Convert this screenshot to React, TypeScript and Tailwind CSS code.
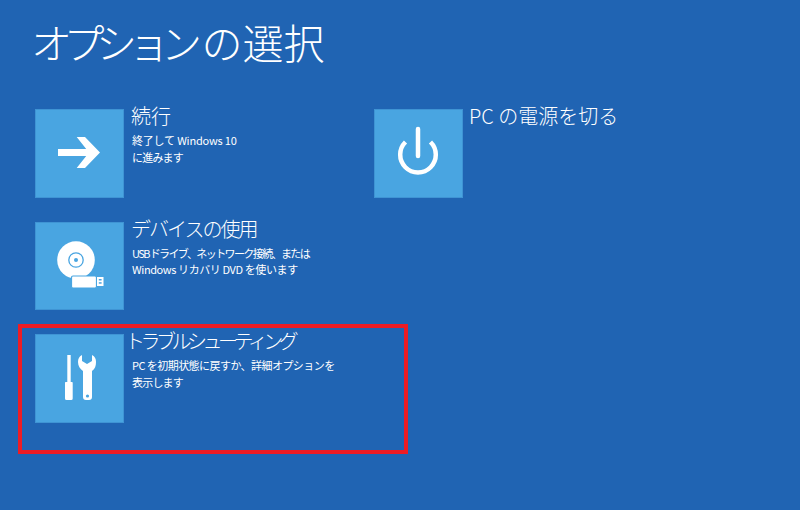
const font = "font-['Noto_Sans_CJK_JP','Noto_Sans',sans-serif]";

// icons are drawn in tile coordinates (89 x 89)
function TileIcon({ children }: { children: React.ReactNode }) {
  return (
    <svg width="89" height="89" viewBox="0 0 89 89" className="block">
      {children}
    </svg>
  );
}

function ArrowIcon() {
  return (
    <TileIcon>
      <path d="M23 40h33v7H23z" fill="#fff" />
      <path d="M41.700 28H50L65 43.500 50 59h-8.300L54 43.500z" fill="#fff" />
    </TileIcon>
  );
}

function DiscIcon() {
  return (
    <TileIcon>
      <circle cx="41" cy="38" r="18.800" fill="#fff" />
      <circle cx="41" cy="38" r="7.200" fill="none" stroke="#49a5e1" strokeWidth="1.300" />
      <circle cx="41" cy="38" r="2" fill="#49a5e1" />
      <rect x="36.500" y="54" width="25" height="12" rx="1.500" fill="#fff" stroke="#49a5e1" strokeWidth="1.200" />
      <rect x="62" y="55" width="6.500" height="9" fill="#fff" />
      <rect x="63.800" y="57" width="2.800" height="1.500" fill="#49a5e1" />
      <rect x="63.800" y="60.200" width="2.800" height="1.500" fill="#49a5e1" />
    </TileIcon>
  );
}

function ToolsIcon() {
  return (
    <TileIcon>
      <path d="M32.300 21h3.400v27H37a.7.7 0 0 1 .7.7V64.500a1.500 1.500 0 0 1-1.500 1.500h-4.700a1.500 1.500 0 0 1-1.500-1.500V48.700a.7.7 0 0 1 .7-.7h1.600z" fill="#fff" />
      <path
        d="M47 21C44 22.500 43 25 43 28c0 4 2 7 5 9v26a3 3 0 0 0 3 3h3a3 3 0 0 0 3-3V37c3-2 4-5 4-9 0-3-1-5.500-4-7v6l-5 3-5-3z"
        fill="#fff"
      />
      <circle cx="52.500" cy="62" r="1.600" fill="#49a5e1" />
    </TileIcon>
  );
}

function PowerIcon() {
  return (
    <TileIcon>
      <path d="M31.500 33A17.800 17.800 0 1 0 56.500 33" fill="none" stroke="#fff" strokeWidth="4.500" />
      <path d="M44 20v27" stroke="#fff" strokeWidth="4.500" strokeLinecap="round" />
    </TileIcon>
  );
}

type Line = { text: string; tracking: string };

function Option({
  icon,
  title,
  lines,
  titleClass = "ml-[7px]",
}: {
  icon: React.ReactNode;
  title: string;
  lines: Line[];
  titleClass?: string;
}) {
  return (
    <div className="flex items-start">
      <div className="h-[88.500px] w-[89px] shrink-0 bg-[#49a5e1] shadow-[inset_0_0_0_1px_#3f94d4]">{icon}</div>
      <div className="-mt-[7px] text-white">
        <h2 className={`whitespace-nowrap text-[20px] leading-[28px] font-light ${titleClass}`}>{title}</h2>
        {lines.length > 0 && (
          <div className="mt-[2px] ml-[8px] text-[11px] leading-[16.500px] whitespace-nowrap">
            {lines.map((l) => (
              <p key={l.text} className={l.tracking}>
                {l.text}
              </p>
            ))}
          </div>
        )}
      </div>
    </div>
  );
}

export default function App() {
  return (
    <div className={`relative h-[510px] w-[800px] overflow-hidden bg-[#2064b3] pt-[11px] pl-[35px] ${font}`}>
      <h1 className="-ml-[4px] text-[41px] leading-[60px] font-light whitespace-nowrap text-white">
        <span className="tracking-[-8.5px]">オプション</span>
        <span className="ml-[8px]">の選択</span>
      </h1>

      <div className="mt-[38px] grid w-[600px] grid-cols-[339px_1fr]">
        <div className="flex flex-col gap-[24px]">
          <Option
            icon={<ArrowIcon />}
            title="続行"
            lines={[
              { text: "終了して Windows 10", tracking: "tracking-[-0.2px]" },
              { text: "に進みます", tracking: "tracking-[-0.8px]" },
            ]}
          />
          <Option
            icon={<DiscIcon />}
            title="デバイスの使用"
            titleClass="ml-[7px] tracking-[-2px]"
            lines={[
              { text: "USB ドライブ、ネットワーク接続、または", tracking: "tracking-[-1.6px]" },
              { text: "Windows リカバリ DVD を使います", tracking: "tracking-[-0.4px]" },
            ]}
          />
          <Option
            icon={<ToolsIcon />}
            title="トラブルシューティング"
            titleClass="ml-[1px] tracking-[-4.5px]"
            lines={[
              { text: "PC を初期状態に戻すか、詳細オプションを", tracking: "tracking-[-0.55px]" },
              { text: "表示します", tracking: "tracking-[-0.8px]" },
            ]}
          />
        </div>
        <div>
          <Option icon={<PowerIcon />} title="PC の電源を切る" titleClass="ml-[6px]" lines={[]} />
        </div>
      </div>

      {/* red highlight drawn over the screenshot */}
      <div className="absolute top-[324px] left-[18px] h-[130px] w-[390px] border-4 border-[#ed1c24]" />
    </div>
  );
}
